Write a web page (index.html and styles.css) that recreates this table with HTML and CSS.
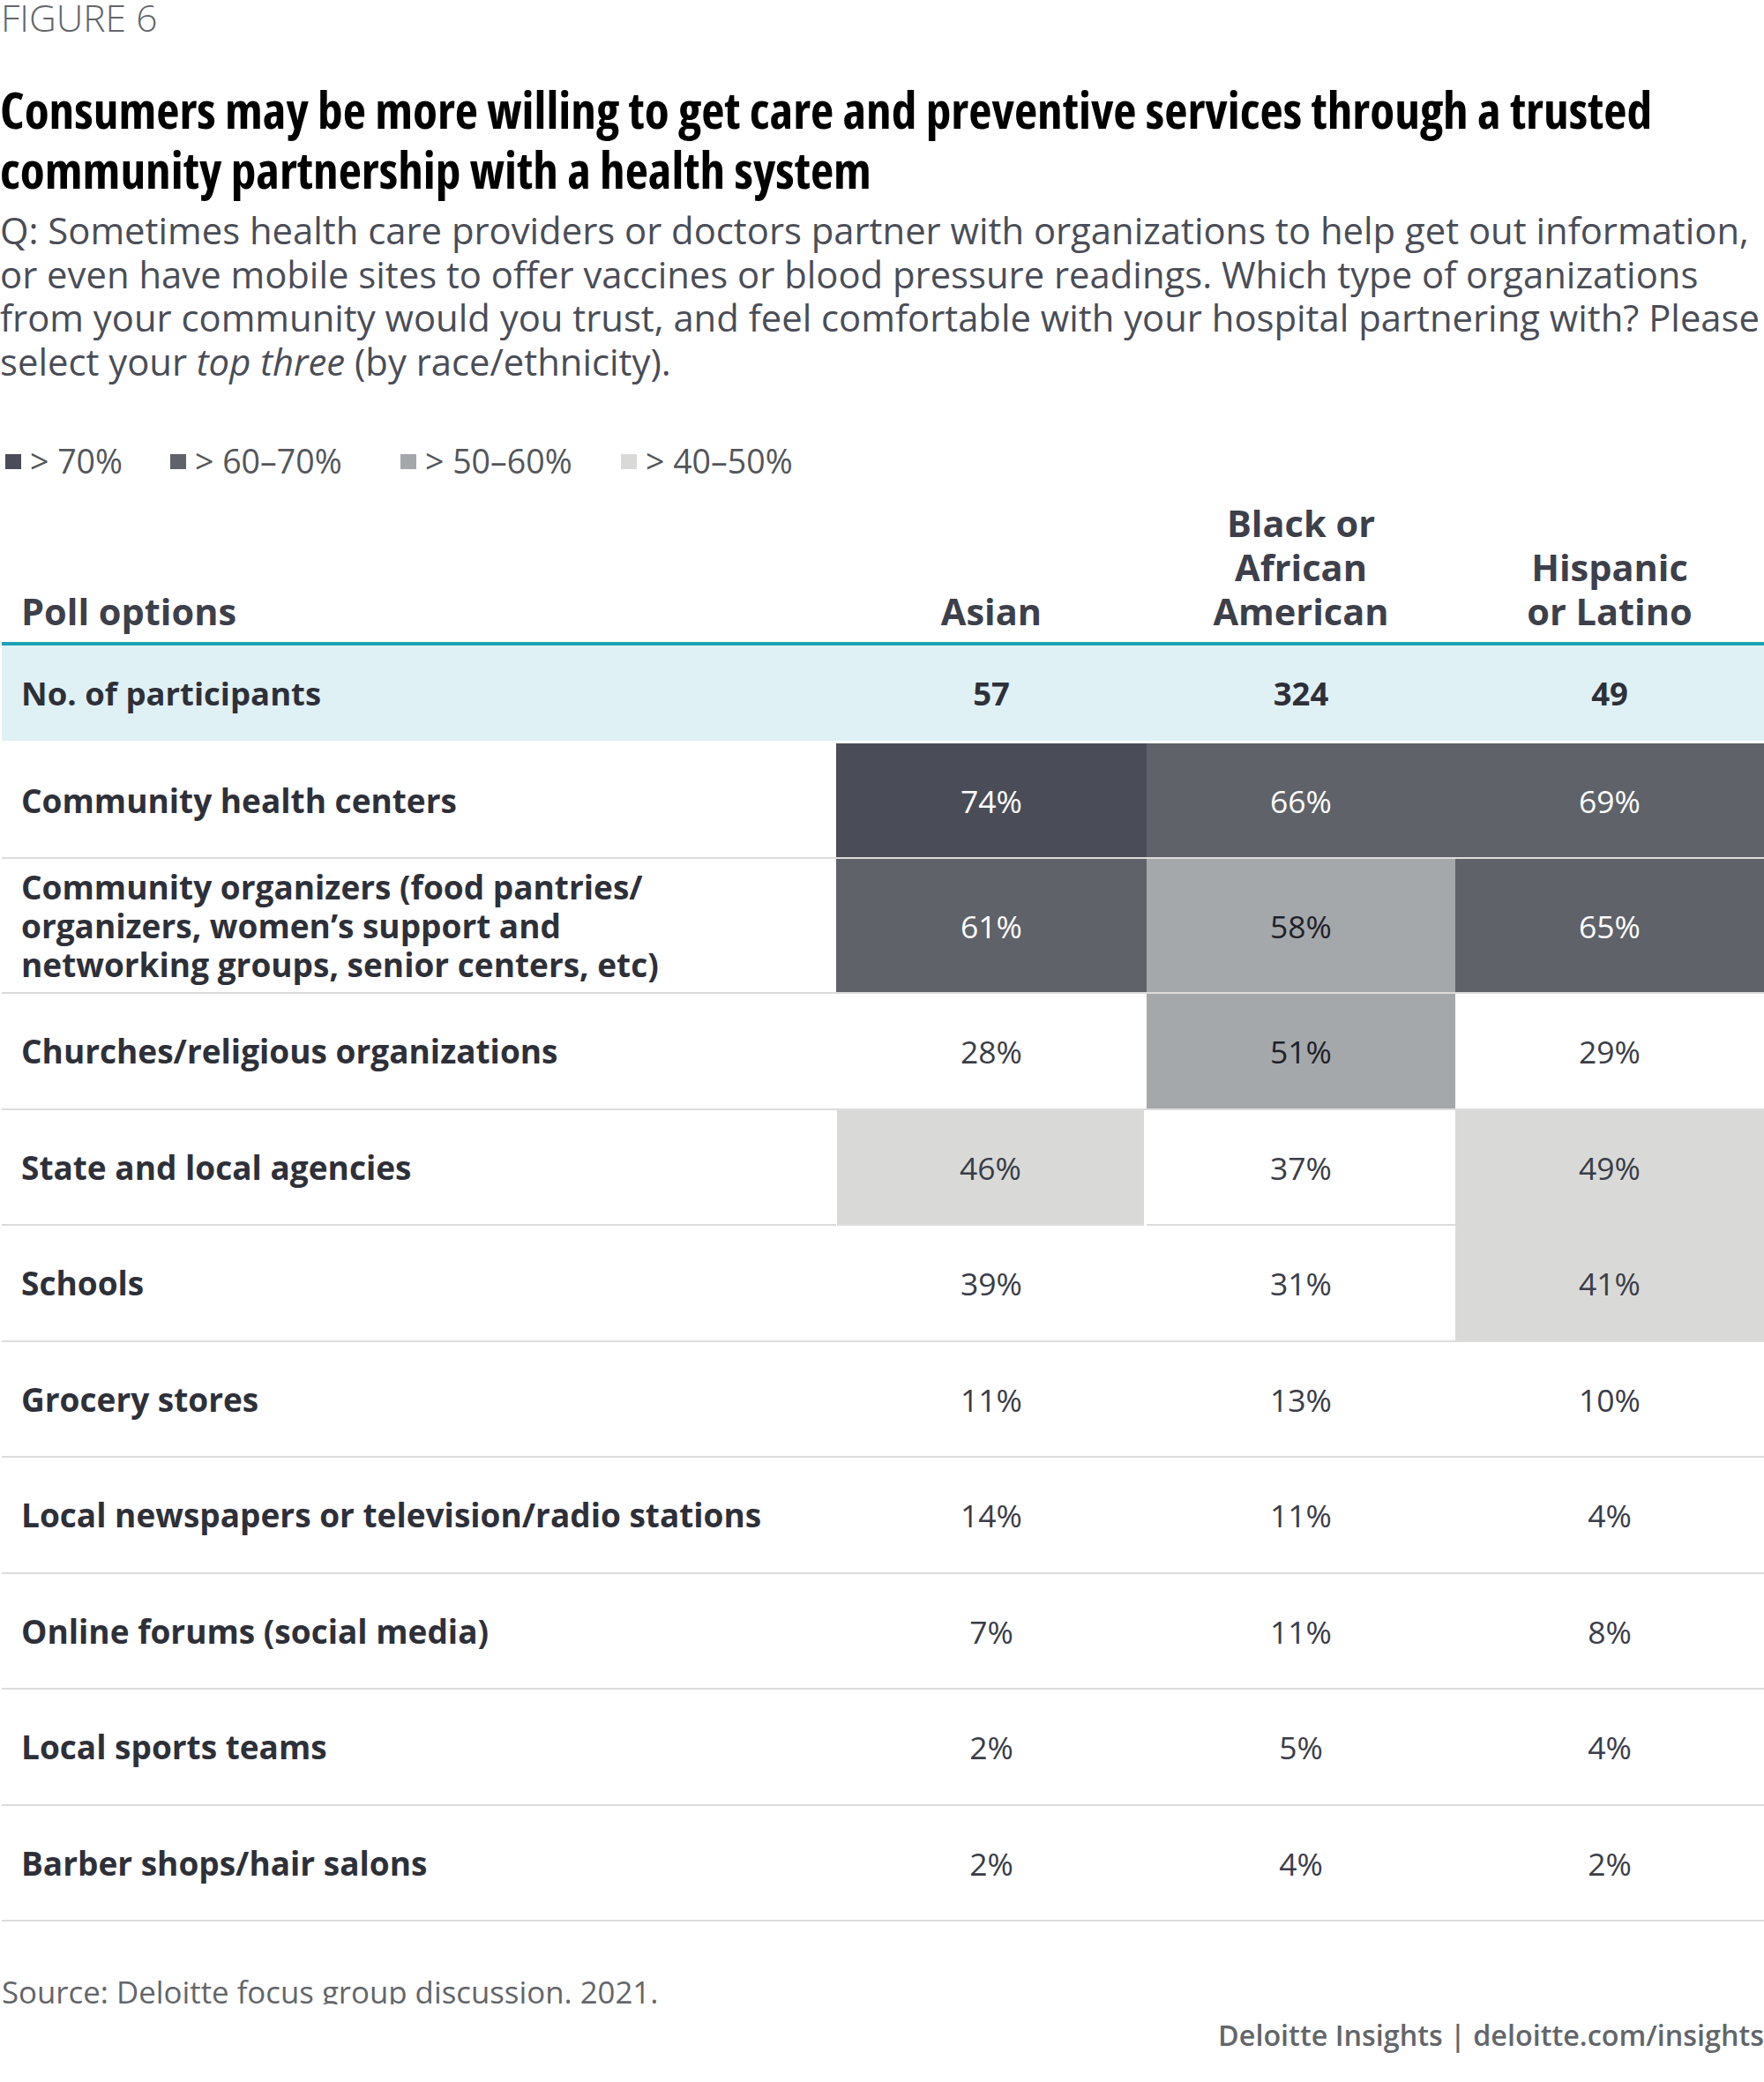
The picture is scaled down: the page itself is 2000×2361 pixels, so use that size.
FILE: index.html
```html
<!DOCTYPE html>
<html lang="en">
<head>
<meta charset="utf-8">
<title>Figure 6</title>
<link rel="stylesheet" href="styles.css">
</head>
<body>
<div class="page">
  <div class="fig-label">FIGURE 6</div>
  <h1 class="title">Consumers may be more willing to get care and preventive services through a trusted<br>community partnership with a health system</h1>
  <p class="question">Q: Sometimes health care providers or doctors partner with organizations to help get out information,<br>or even have mobile sites to offer vaccines or blood pressure readings. Which type of organizations<br>from your community would you trust, and feel comfortable with your hospital partnering with? Please<br>select your <em>top three</em> (by race/ethnicity).</p>

  <div class="legend">
    <div class="legend-item"><span class="swatch c70"></span>&gt; 70%</div>
    <div class="legend-item"><span class="swatch c60"></span>&gt; 60–70%</div>
    <div class="legend-item"><span class="swatch c50"></span>&gt; 50–60%</div>
    <div class="legend-item"><span class="swatch c40"></span>&gt; 40–50%</div>
  </div>

  <div class="table">
    <div class="thead">
      <div class="th th-label">Poll options</div>
      <div class="th">Asian</div>
      <div class="th">Black or<br>African<br>American</div>
      <div class="th">Hispanic<br>or Latino</div>
    </div>
    <div class="participants">
      <div class="p-label">No. of participants</div>
      <div class="p-val">57</div>
      <div class="p-val">324</div>
      <div class="p-val">49</div>
    </div>

    <div class="row">
      <div class="label">Community health centers</div>
      <div class="cell c70">74%</div>
      <div class="cell c60">66%</div>
      <div class="cell c60">69%</div>
    </div>
    <div class="row row-tall">
      <div class="label">Community organizers (food pantries/<br>organizers, women’s support and<br>networking groups, senior centers, etc)</div>
      <div class="cell c60">61%</div>
      <div class="cell c50">58%</div>
      <div class="cell c60">65%</div>
    </div>
    <div class="row">
      <div class="label">Churches/religious organizations</div>
      <div class="cell">28%</div>
      <div class="cell c50">51%</div>
      <div class="cell">29%</div>
    </div>
    <div class="row">
      <div class="label">State and local agencies</div>
      <div class="cell c40 inset">46%</div>
      <div class="cell">37%</div>
      <div class="cell c40 merged-top">49%</div>
    </div>
    <div class="row">
      <div class="label">Schools</div>
      <div class="cell">39%</div>
      <div class="cell">31%</div>
      <div class="cell c40">41%</div>
    </div>
    <div class="row">
      <div class="label">Grocery stores</div>
      <div class="cell">11%</div>
      <div class="cell">13%</div>
      <div class="cell">10%</div>
    </div>
    <div class="row">
      <div class="label">Local newspapers or television/radio stations</div>
      <div class="cell">14%</div>
      <div class="cell">11%</div>
      <div class="cell">4%</div>
    </div>
    <div class="row">
      <div class="label">Online forums (social media)</div>
      <div class="cell">7%</div>
      <div class="cell">11%</div>
      <div class="cell">8%</div>
    </div>
    <div class="row">
      <div class="label">Local sports teams</div>
      <div class="cell">2%</div>
      <div class="cell">5%</div>
      <div class="cell">4%</div>
    </div>
    <div class="row">
      <div class="label">Barber shops/hair salons</div>
      <div class="cell">2%</div>
      <div class="cell">4%</div>
      <div class="cell">2%</div>
    </div>
  </div>

  <div class="source-clip">
    <div class="source">Source: Deloitte focus group discussion. 2021.</div>
  </div>
  <div class="credit">Deloitte Insights | deloitte.com/insights</div>
</div>
</body>
</html>
```

FILE: styles.css
```css
html, body {
  margin: 0;
  padding: 0;
  background: #ffffff;
}

.page {
  width: 2000px;
  font-family: "Open Sans", "Liberation Sans", sans-serif;
  color: #3a3d48;
}

.fig-label {
  font-size: 42.5px;
  font-weight: 300;
  line-height: 40px;
  color: #63666a;
  padding-left: 1px;
}

.title {
  margin: 50px 0 0 0;
  font-size: 57.3px;
  font-weight: 700;
  font-stretch: 75%;
  line-height: 68px;
  color: #000000;
}

.question {
  margin: 10px 0 0 0;
  font-size: 41.8px;
  line-height: 49.7px;
  color: #4a4d57;
}

.question em {
  font-style: italic;
}

.legend {
  display: flex;
  margin-top: 66px;
  padding-left: 6px;
  font-size: 37.5px;
  line-height: 44px;
  color: #53565a;
}

.legend-item {
  display: flex;
  align-items: center;
}

.legend-item:nth-child(1) { width: 187px; }
.legend-item:nth-child(2) { width: 261px; }
.legend-item:nth-child(3) { width: 250px; }

.swatch {
  width: 18px;
  height: 17px;
  margin-right: 10px;
  margin-top: 2px;
}

.c70 { background: #4a4d57; color: #ffffff; }
.c60 { background: #5f6269; color: #ffffff; }
.c50 { background: #a5a8ab; color: #1f2128; }
.c40 { background: #d9dad8; color: #3a3d48; }

.table {
  margin-top: 23px;
  padding-left: 2px;
}

.thead {
  display: grid;
  grid-template-columns: 946px 352px 350px 350px;
  align-items: end;
  font-size: 41.5px;
  font-weight: 700;
  line-height: 50px;
  color: #3d404a;
  padding-bottom: 10px;
  border-bottom: 4px solid #1ba2b3;
}

.th {
  text-align: center;
}

.th-label {
  text-align: left;
  padding-left: 22px;
}

.participants {
  display: grid;
  grid-template-columns: 946px 352px 350px 350px;
  align-items: center;
  height: 108px;
  background: #e0f1f6;
  font-size: 36.5px;
  font-weight: 700;
  color: #2e3039;
  margin-bottom: 3px;
}

.p-label {
  padding-left: 22px;
}

.p-val {
  text-align: center;
}

.row {
  display: grid;
  grid-template-columns: 946px 352px 350px 350px;
  height: 131.5px;
}

.row-tall {
  height: 153px;
}

.label,
.cell {
  display: flex;
  align-items: center;
  border-bottom: 2px solid #dcdcdc;
  line-height: 44px;
}

.label {
  padding-left: 22px;
  font-size: 37px;
  font-weight: 700;
  color: #2e3039;
}

.cell {
  justify-content: center;
  font-size: 35.5px;
  font-weight: 400;
}

.cell.inset {
  margin-left: 1px;
  margin-right: 3px;
}

.cell.merged-top {
  border-bottom-color: #d9dad8;
}

.source-clip {
  margin-top: 58px;
  height: 36px;
  overflow: hidden;
}

.source {
  font-size: 34.8px;
  line-height: 44px;
  color: #63666a;
  padding-left: 2px;
}

.credit {
  margin-top: 12px;
  text-align: right;
  font-size: 32.3px;
  font-weight: 600;
  line-height: 44px;
  color: #63666a;
}
```
